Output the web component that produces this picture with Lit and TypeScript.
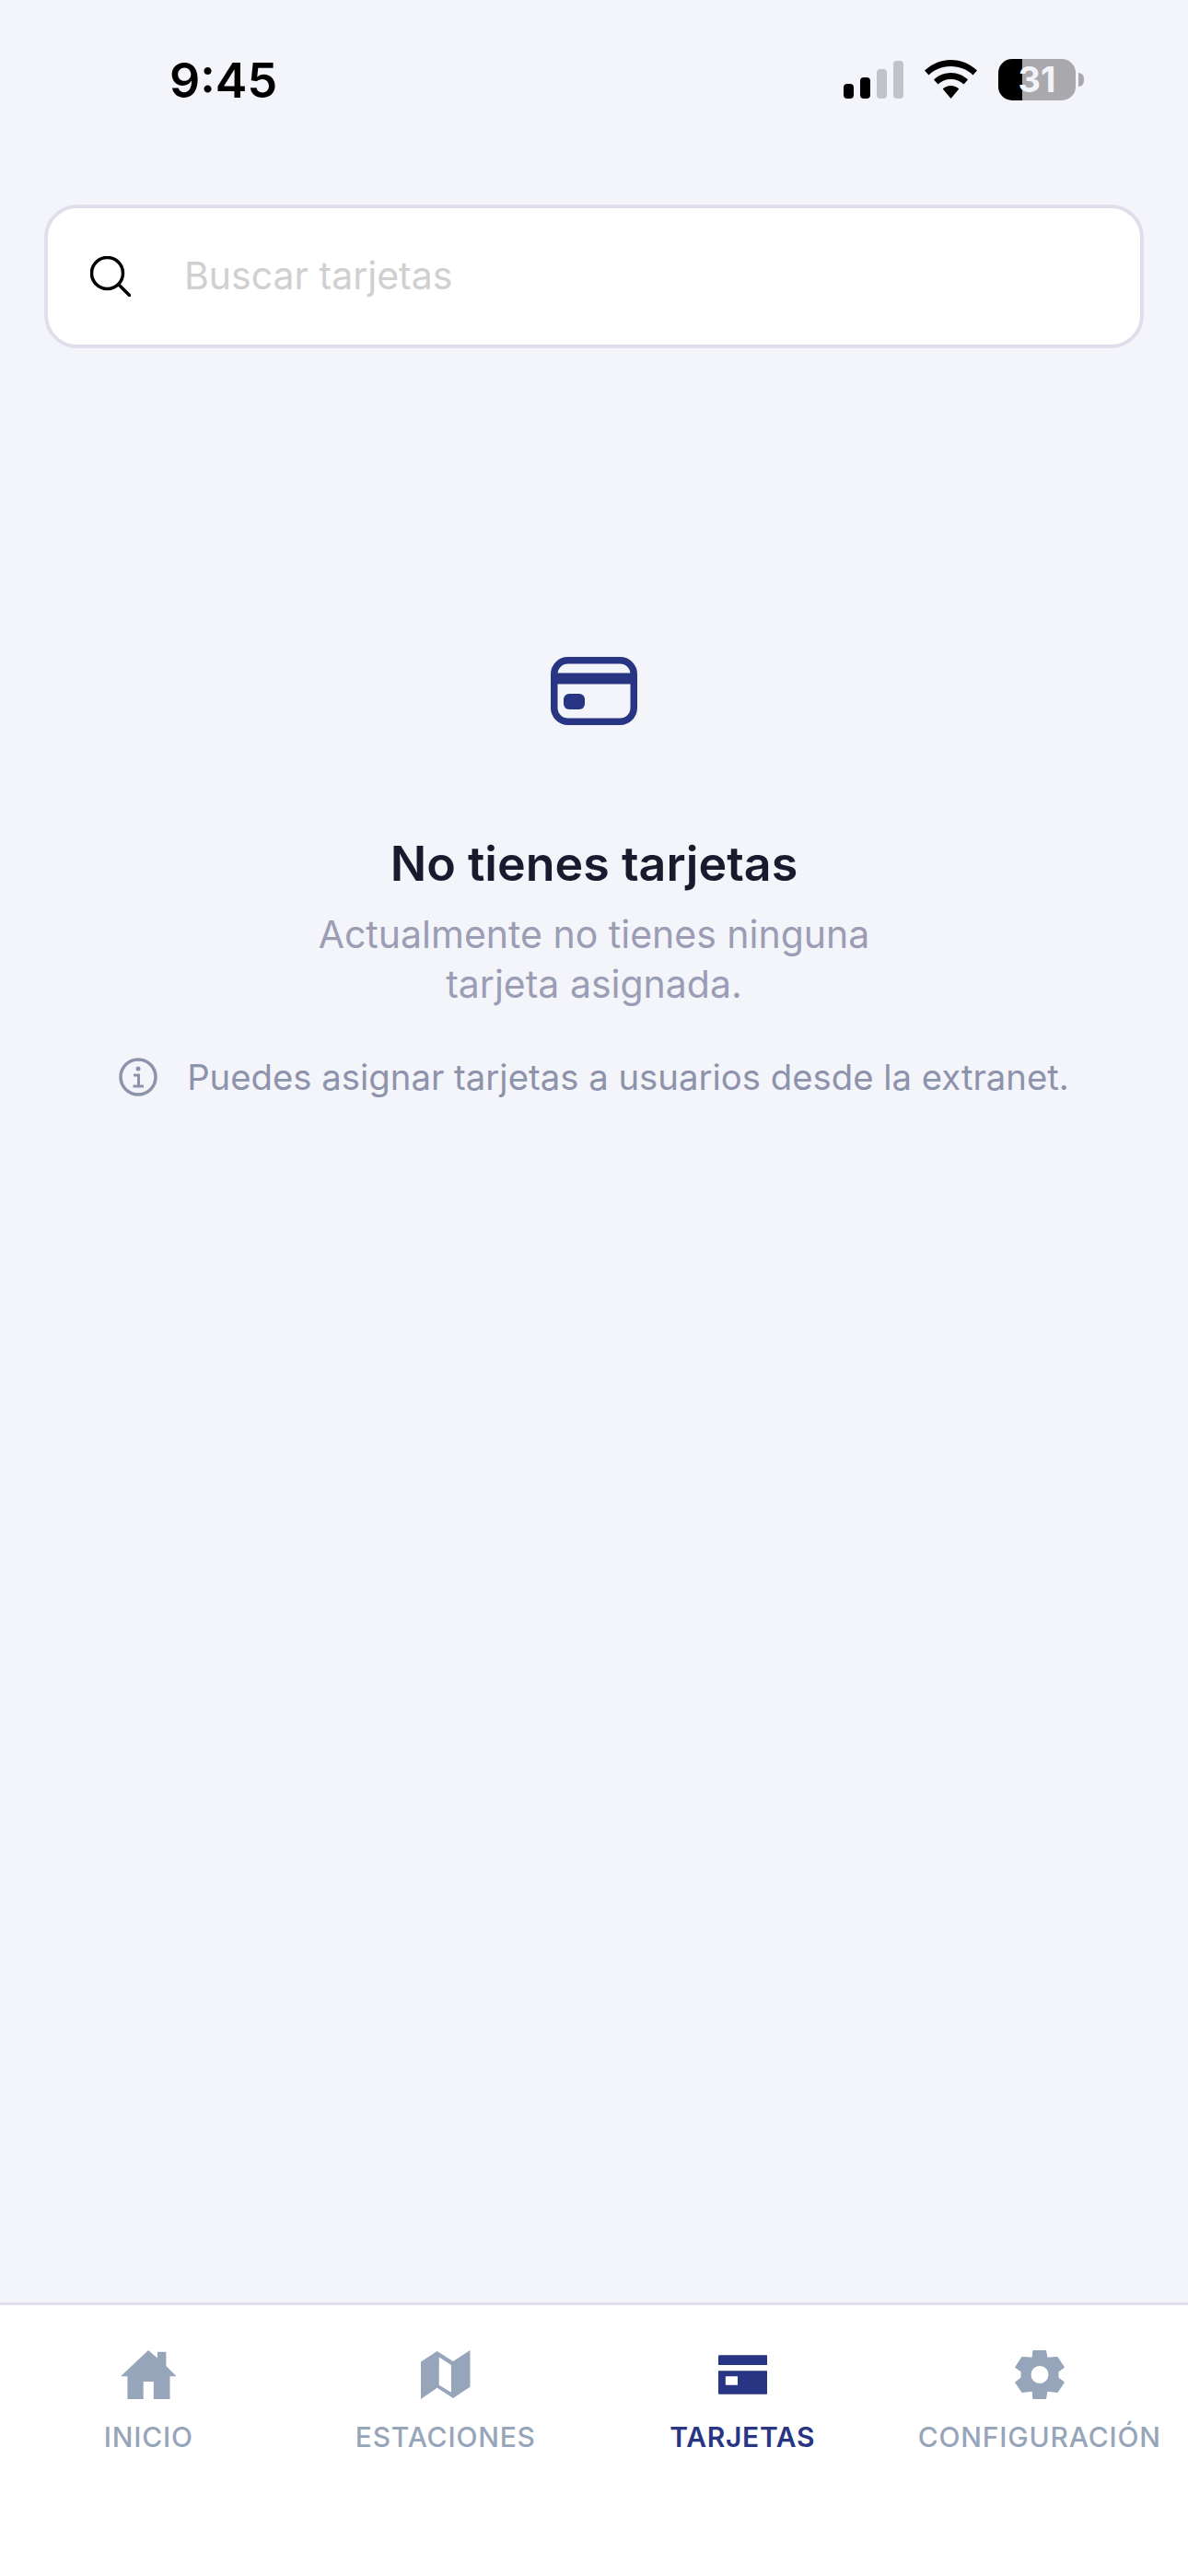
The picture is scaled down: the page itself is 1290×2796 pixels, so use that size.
import { LitElement, css, html, svg } from "lit";
import { customElement } from "lit/decorators.js";

const tabs = [
  {
    label: "INICIO",
    w: 60.5,
    h: 53,
    box: "320 182 147 160",
    art: svg`<path d="M393 182 417 208V187H440V233L467 267H450V342H407V285H380V342H338V267H320Z"/>`,
  },
  {
    label: "ESTACIONES",
    w: 53.5,
    h: 53,
    box: "1110 182 130 160",
    art: svg`<path fill-rule="evenodd" d="M1110 220 1153 185 1195 218 1240 182V302L1195 339 1153 305 1110 342ZM1158 205V296L1190 320V230Z"/>`,
  },
  {
    label: "TARJETAS",
    w: 53.5,
    h: 53,
    box: "329 182 130 160",
    active: true,
    art: svg`<path d="M332 198H456A3 3 0 0 1 459 201V230H329V201A3 3 0 0 1 332 198Z"/><path fill-rule="evenodd" d="M329 249H459V323A3 3 0 0 1 456 326H332A3 3 0 0 1 329 323ZM348 267V296H380V267Z"/>`,
  },
  {
    label: "CONFIGURACIÓN",
    w: 54,
    h: 53,
    box: "-27 -26.500 54 53",
    art: svg`<path fill-rule="evenodd" stroke="currentColor" stroke-width="1" stroke-linejoin="round" d="M-7-26.500H6.500L8-18.300 19.300-19 26.500-8 20-3.300V3.300L26.500 8.300 19.300 19 8 17.700 6.500 26.500H-7L-8 17.700-19.300 19-26.500 8.300-20 3.300V-3.300L-26.500-8-19.300-19-8-18.300ZM0-10A10 10 0 1 0 0 10 10 10 0 1 0 0-10Z"/>`,
  },
];

@customElement("app-root")
export class AppRoot extends LitElement {
  static styles = css`
    :host {
      display: flex;
      flex-direction: column;
      height: 2796px;
      background: #f4f5fa;
      font-family: Inter, "Liberation Sans", sans-serif;
    }
    .status {
      display: flex;
      align-items: center;
      justify-content: space-between;
      height: 172px;
      padding: 0 113px 0 184px;
      box-sizing: border-box;
    }
    .time {
      margin-top: 3px;
      font-size: 52px;
      font-weight: 600;
      color: #000;
      line-height: 1;
    }
    .indicators {
      display: flex;
      align-items: center;
      gap: 23px;
    }
    .battery {
      position: relative;
      display: flex;
      align-items: center;
      justify-content: center;
      width: 84px;
      height: 45px;
      border-radius: 15px;
      background: linear-gradient(90deg, #000 26px, #a9a8ad 26px);
      color: #f3f4fa;
      font-size: 38px;
      font-weight: 700;
      margin-right: 9px;
    }
    .battery::after {
      content: "";
      position: absolute;
      right: -9px;
      top: 15px;
      width: 6px;
      height: 15px;
      border-radius: 0 8px 8px 0;
      background: #a9a8ad;
    }
    .search {
      display: flex;
      align-items: center;
      height: 156px;
      margin: 50px 48px 0;
      padding-left: 46px;
      box-sizing: border-box;
      border: 4px solid #e0deea;
      border-radius: 36px;
      background: #fff;
    }
    .search span {
      margin: 0 0 3px 58px;
      font-size: 41px;
      color: #d0d0d0;
    }
    .empty {
      flex: 1;
      display: flex;
      flex-direction: column;
      align-items: center;
      padding-top: 335px;
    }
    h1 {
      margin: 121px 0 0;
      font-size: 52px;
      line-height: 60px;
      font-weight: 600;
      color: #1a1a2e;
    }
    p {
      margin: 19px 0 0;
      font-size: 41px;
      line-height: 54px;
      text-align: center;
      color: #9b9db5;
    }
    .info {
      display: flex;
      align-items: center;
      gap: 32px;
      margin-top: 51px;
      font-size: 38.300px;
      color: #8e93ac;
    }
    .tabbar {
      display: grid;
      grid-template-columns: repeat(4, 1fr);
      height: 297px;
      box-sizing: border-box;
      padding-top: 49px;
      border-top: 3px solid #e0deea;
      background: #fff;
    }
    .tab {
      display: flex;
      flex-direction: column;
      align-items: center;
      gap: 23px;
      color: #97a5ba;
      font-size: 30px;
      font-weight: 500;
      line-height: 36px;
      letter-spacing: 0.800px;
      white-space: nowrap;
    }
    .tab.active {
      color: #283583;
      font-weight: 600;
      letter-spacing: 0.700px;
    }
    .tab svg {
      fill: currentColor;
    }
  `;

  render() {
    return html`
      <div class="status">
        <span class="time">9:45</span>
        <div class="indicators">
          <svg width="65" height="41" viewBox="0 0 65 41">
            <rect x="0" y="25" width="11" height="16" rx="4" />
            <rect x="18" y="18" width="11" height="23" rx="4" />
            <rect x="36" y="9" width="11" height="32" rx="4" fill="#c2c3c8" />
            <rect x="54" y="0" width="11" height="41" rx="4" fill="#c2c3c8" />
          </svg>
          <svg width="57" height="42" viewBox="0 0 57 42">
            <path
              d="M28.500 0C39.500 0 49.500 4.300 57 11.500L52.500 16.500C46.300 10.500 37.800 7 28.500 7S10.700 10.500 4.500 16.500L0 11.500C7.500 4.300 17.500 0 28.500 0Z"
            />
            <path
              d="M28.500 14C35.700 14 42.300 16.900 47 21.500L42.500 26.500C38.900 23 34 21 28.500 21S18.100 23 14.500 26.500L10 21.500C14.700 16.900 21.300 14 28.500 14Z"
            />
            <path
              d="M28.500 28C31.900 28 35 29.300 37.300 31.500L28.500 42 19.700 31.500C22 29.300 25.100 28 28.500 28Z"
            />
          </svg>
          <div class="battery">31</div>
        </div>
      </div>

      <div class="search">
        <svg width="44" height="44" viewBox="0 0 44 44" fill="none" stroke="#000" stroke-width="3.500">
          <circle cx="18.500" cy="18.500" r="17" />
          <path d="M31 31 42.500 42.500" stroke-linecap="round" />
        </svg>
        <span>Buscar tarjetas</span>
      </div>

      <div class="empty">
        <svg width="94" height="74" viewBox="0 0 94 74" fill="#283583">
          <rect x="3.750" y="3.750" width="86.500" height="66.500" rx="15" fill="none" stroke="#283583" stroke-width="7.500" />
          <rect x="3" y="17.500" width="88" height="12" />
          <rect x="14" y="40" width="23" height="17" rx="6" />
        </svg>
        <h1>No tienes tarjetas</h1>
        <p>Actualmente no tienes ninguna<br />tarjeta asignada.</p>
        <div class="info">
          <svg width="42" height="42" viewBox="0 0 42 42" fill="none" stroke="currentColor" stroke-width="3.500">
            <circle cx="21" cy="21" r="19" />
            <path d="M16 19H21.500V31M15.500 31H27" stroke-width="3" />
            <circle cx="21" cy="12" r="2.500" fill="currentColor" stroke="none" />
          </svg>
          <span>Puedes asignar tarjetas a usuarios desde la extranet.</span>
        </div>
      </div>

      <nav class="tabbar">
        ${tabs.map(
          (t) => html`
            <div class="tab ${t.active ? "active" : ""}">
              <svg width=${t.w} height=${t.h} viewBox=${t.box} preserveAspectRatio="none">${t.art}</svg>
              <span>${t.label}</span>
            </div>
          `,
        )}
      </nav>
    `;
  }
}
